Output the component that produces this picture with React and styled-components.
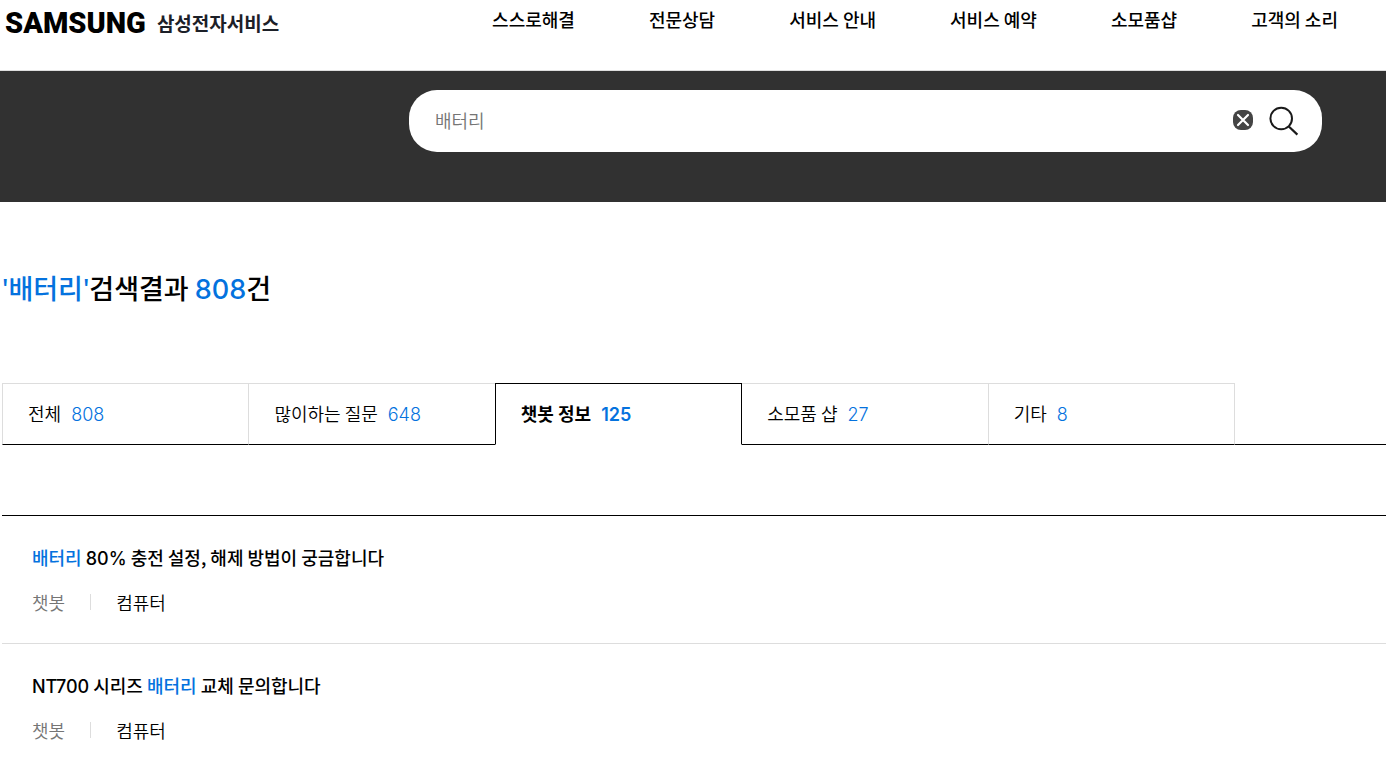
import React, { useState } from 'react';
import styled, { createGlobalStyle } from 'styled-components';

const GlobalStyle = createGlobalStyle`
  * {
    box-sizing: border-box;
  }
  body {
    margin: 0;
    background-color: #fff;
    color: #000;
    font-family: 'Noto Sans CJK KR', sans-serif;
    font-size: 18px;
    line-height: 28px;
  }
  a {
    color: inherit;
    text-decoration: none;
  }
`;

const Header = styled.header`
  display: flex;
  align-items: flex-start;
  justify-content: space-between;
  height: 71px;
  padding: 5px 48px 0 5px;
  border-bottom: 1px solid #ddd;
`;

const Logo = styled.a`
  display: flex;
  align-items: center;
  gap: 11px;
  height: 36px;
  white-space: nowrap;
`;

const LogoName = styled.span`
  font-family: Roboto, sans-serif;
  font-size: 29px;
  font-weight: 900;
`;

const LogoService = styled.span`
  color: #1c2028;
  font-size: 19px;
  font-weight: 700;
`;

const Nav = styled.nav`
  display: flex;
  gap: 74px;
  white-space: nowrap;
`;

const NavLink = styled.a`
  font-weight: 500;
`;

const SearchArea = styled.section`
  padding: 19px 64px 50px 409px;
  background-color: #313131;
`;

const SearchForm = styled.form`
  display: flex;
  align-items: center;
  height: 62px;
  padding: 0 23px 0 26px;
  border-radius: 28px;
  background-color: #fff;
`;

const SearchInput = styled.input`
  flex: 1;
  min-width: 0;
  height: 40px;
  padding: 0 0 2px;
  border: none;
  outline: none;
  background: none;
  color: #757575;
  font-family: inherit;
  font-size: 18px;
  font-weight: 350;
`;

const IconButton = styled.button`
  display: flex;
  margin-left: ${(props) => props.$space || 0}px;
  padding: 0;
  border: none;
  background: none;
  cursor: pointer;
`;

const ClearButton = styled(IconButton)`
  padding-bottom: 2px;
`;

const Main = styled.main`
  padding: 66px 0 0 2px;
`;

const ResultTitle = styled.h1`
  margin: 0;
  font-size: 27px;
  font-weight: 500;
  line-height: 40px;
`;

const Point = styled.em`
  color: #0472de;
  font-style: normal;
`;

const Num = styled.span`
  font-family: Inter, sans-serif;
  line-height: 1;
`;

const Quote = styled.span`
  font-family: 'Noto Sans', sans-serif;
  line-height: 1;
`;

const TabList = styled.div`
  display: flex;
  margin-top: 75px;
  padding-right: 151px;
  border-bottom: 1px solid #000;
`;

const Tab = styled.button`
  position: relative;
  z-index: ${(props) => (props.$active ? 1 : 0)};
  display: flex;
  flex: 1 1 0;
  align-items: center;
  gap: 10px;
  height: 62px;
  margin: 0 0 -1px -1px;
  padding: 0 25px 2px;
  border: 1px solid ${(props) => (props.$active ? '#000' : '#ddd')};
  border-bottom-color: ${(props) => (props.$active ? '#fff' : '#000')};
  background-color: #fff;
  color: #000;
  font-family: inherit;
  font-size: 18px;
  font-weight: ${(props) => (props.$active ? 700 : 350)};
  white-space: nowrap;
  cursor: pointer;

  &:first-child {
    margin-left: 0;
  }
`;

const TabCount = styled(Num)`
  padding-top: 3px;
  color: #0472de;
  font-weight: ${(props) => (props.$active ? 600 : 300)};
`;

const ResultList = styled.ul`
  margin: 70px 0 0;
  padding: 0;
  border-top: 1px solid #000;
  list-style: none;
`;

const ResultItem = styled.li`
  padding: 27px 30px 29px;
  border-bottom: 1px solid #ddd;

  &:last-child {
    padding-bottom: 20px;
    border-bottom: none;
  }
`;

const ItemTitle = styled.a`
  display: block;
  font-weight: 500;
`;

const Meta = styled.div`
  display: flex;
  align-items: center;
  margin-top: 19px;
  font-weight: 350;
  line-height: 24px;
`;

const Source = styled.span`
  padding-right: 25px;
  color: #757575;
`;

const Category = styled.span`
  display: flex;
  align-items: center;

  &::before {
    content: '';
    width: 1px;
    height: 16px;
    margin-right: 25px;
    background-color: #ddd;
  }
`;

const menus = ['스스로해결', '전문상담', '서비스 안내', '서비스 예약', '소모품샵', '고객의 소리'];

const tabs = [
  { name: '전체', count: 808 },
  { name: '많이하는 질문', count: 648 },
  { name: '챗봇 정보', count: 125 },
  { name: '소모품 샵', count: 27 },
  { name: '기타', count: 8 },
];

const ClearIcon = () => (
  <svg width="20" height="20" viewBox="0 0 20 20" aria-hidden="true">
    <rect width="20" height="20" rx="8" fill="#444" />
    <path d="M5 5l10 10M15 5L5 15" stroke="#fff" strokeWidth="2.2" strokeLinecap="round" />
  </svg>
);

const SearchIcon = () => (
  <svg width="30" height="30" viewBox="0 0 30 30" fill="none" stroke="#1a1a1a" aria-hidden="true">
    <circle cx="12.2" cy="12.5" r="10.8" strokeWidth="2" />
    <path d="M19.8 20.5L28.4 28.6" strokeWidth="2.2" />
  </svg>
);

const App = () => {
  const [keyword, setKeyword] = useState('배터리');
  const [activeTab, setActiveTab] = useState('챗봇 정보');

  return (
    <>
      <GlobalStyle />
      <Header>
        <Logo href="#">
          <LogoName>SAMSUNG</LogoName>
          <LogoService>삼성전자서비스</LogoService>
        </Logo>
        <Nav>
          {menus.map((menu) => (
            <NavLink key={menu} href="#">{menu}</NavLink>
          ))}
        </Nav>
      </Header>
      <SearchArea>
        <SearchForm onSubmit={(e) => e.preventDefault()}>
          <SearchInput
            type="text"
            aria-label="검색어"
            value={keyword}
            onChange={(e) => setKeyword(e.target.value)}
          />
          <ClearButton type="button" aria-label="지우기" onClick={() => setKeyword('')}>
            <ClearIcon />
          </ClearButton>
          <IconButton type="submit" aria-label="검색" $space={16}>
            <SearchIcon />
          </IconButton>
        </SearchForm>
      </SearchArea>
      <Main>
        <ResultTitle>
          <Point><Quote>'</Quote>배터리<Quote>'</Quote></Point>검색결과 <Point><Num>808</Num></Point>건
        </ResultTitle>
        <TabList role="tablist">
          {tabs.map((tab) => (
            <Tab
              key={tab.name}
              type="button"
              role="tab"
              aria-selected={tab.name === activeTab}
              $active={tab.name === activeTab}
              onClick={() => setActiveTab(tab.name)}
            >
              {tab.name}
              <TabCount $active={tab.name === activeTab}>{tab.count}</TabCount>
            </Tab>
          ))}
        </TabList>
        <ResultList>
          <ResultItem>
            <ItemTitle href="#">
              <Point>배터리</Point> <Num>80%</Num> 충전 설정, 해제 방법이 궁금합니다
            </ItemTitle>
            <Meta>
              <Source>챗봇</Source>
              <Category>컴퓨터</Category>
            </Meta>
          </ResultItem>
          <ResultItem>
            <ItemTitle href="#">
              <Num>NT700</Num> 시리즈 <Point>배터리</Point> 교체 문의합니다
            </ItemTitle>
            <Meta>
              <Source>챗봇</Source>
              <Category>컴퓨터</Category>
            </Meta>
          </ResultItem>
        </ResultList>
      </Main>
    </>
  );
};

export default App;
